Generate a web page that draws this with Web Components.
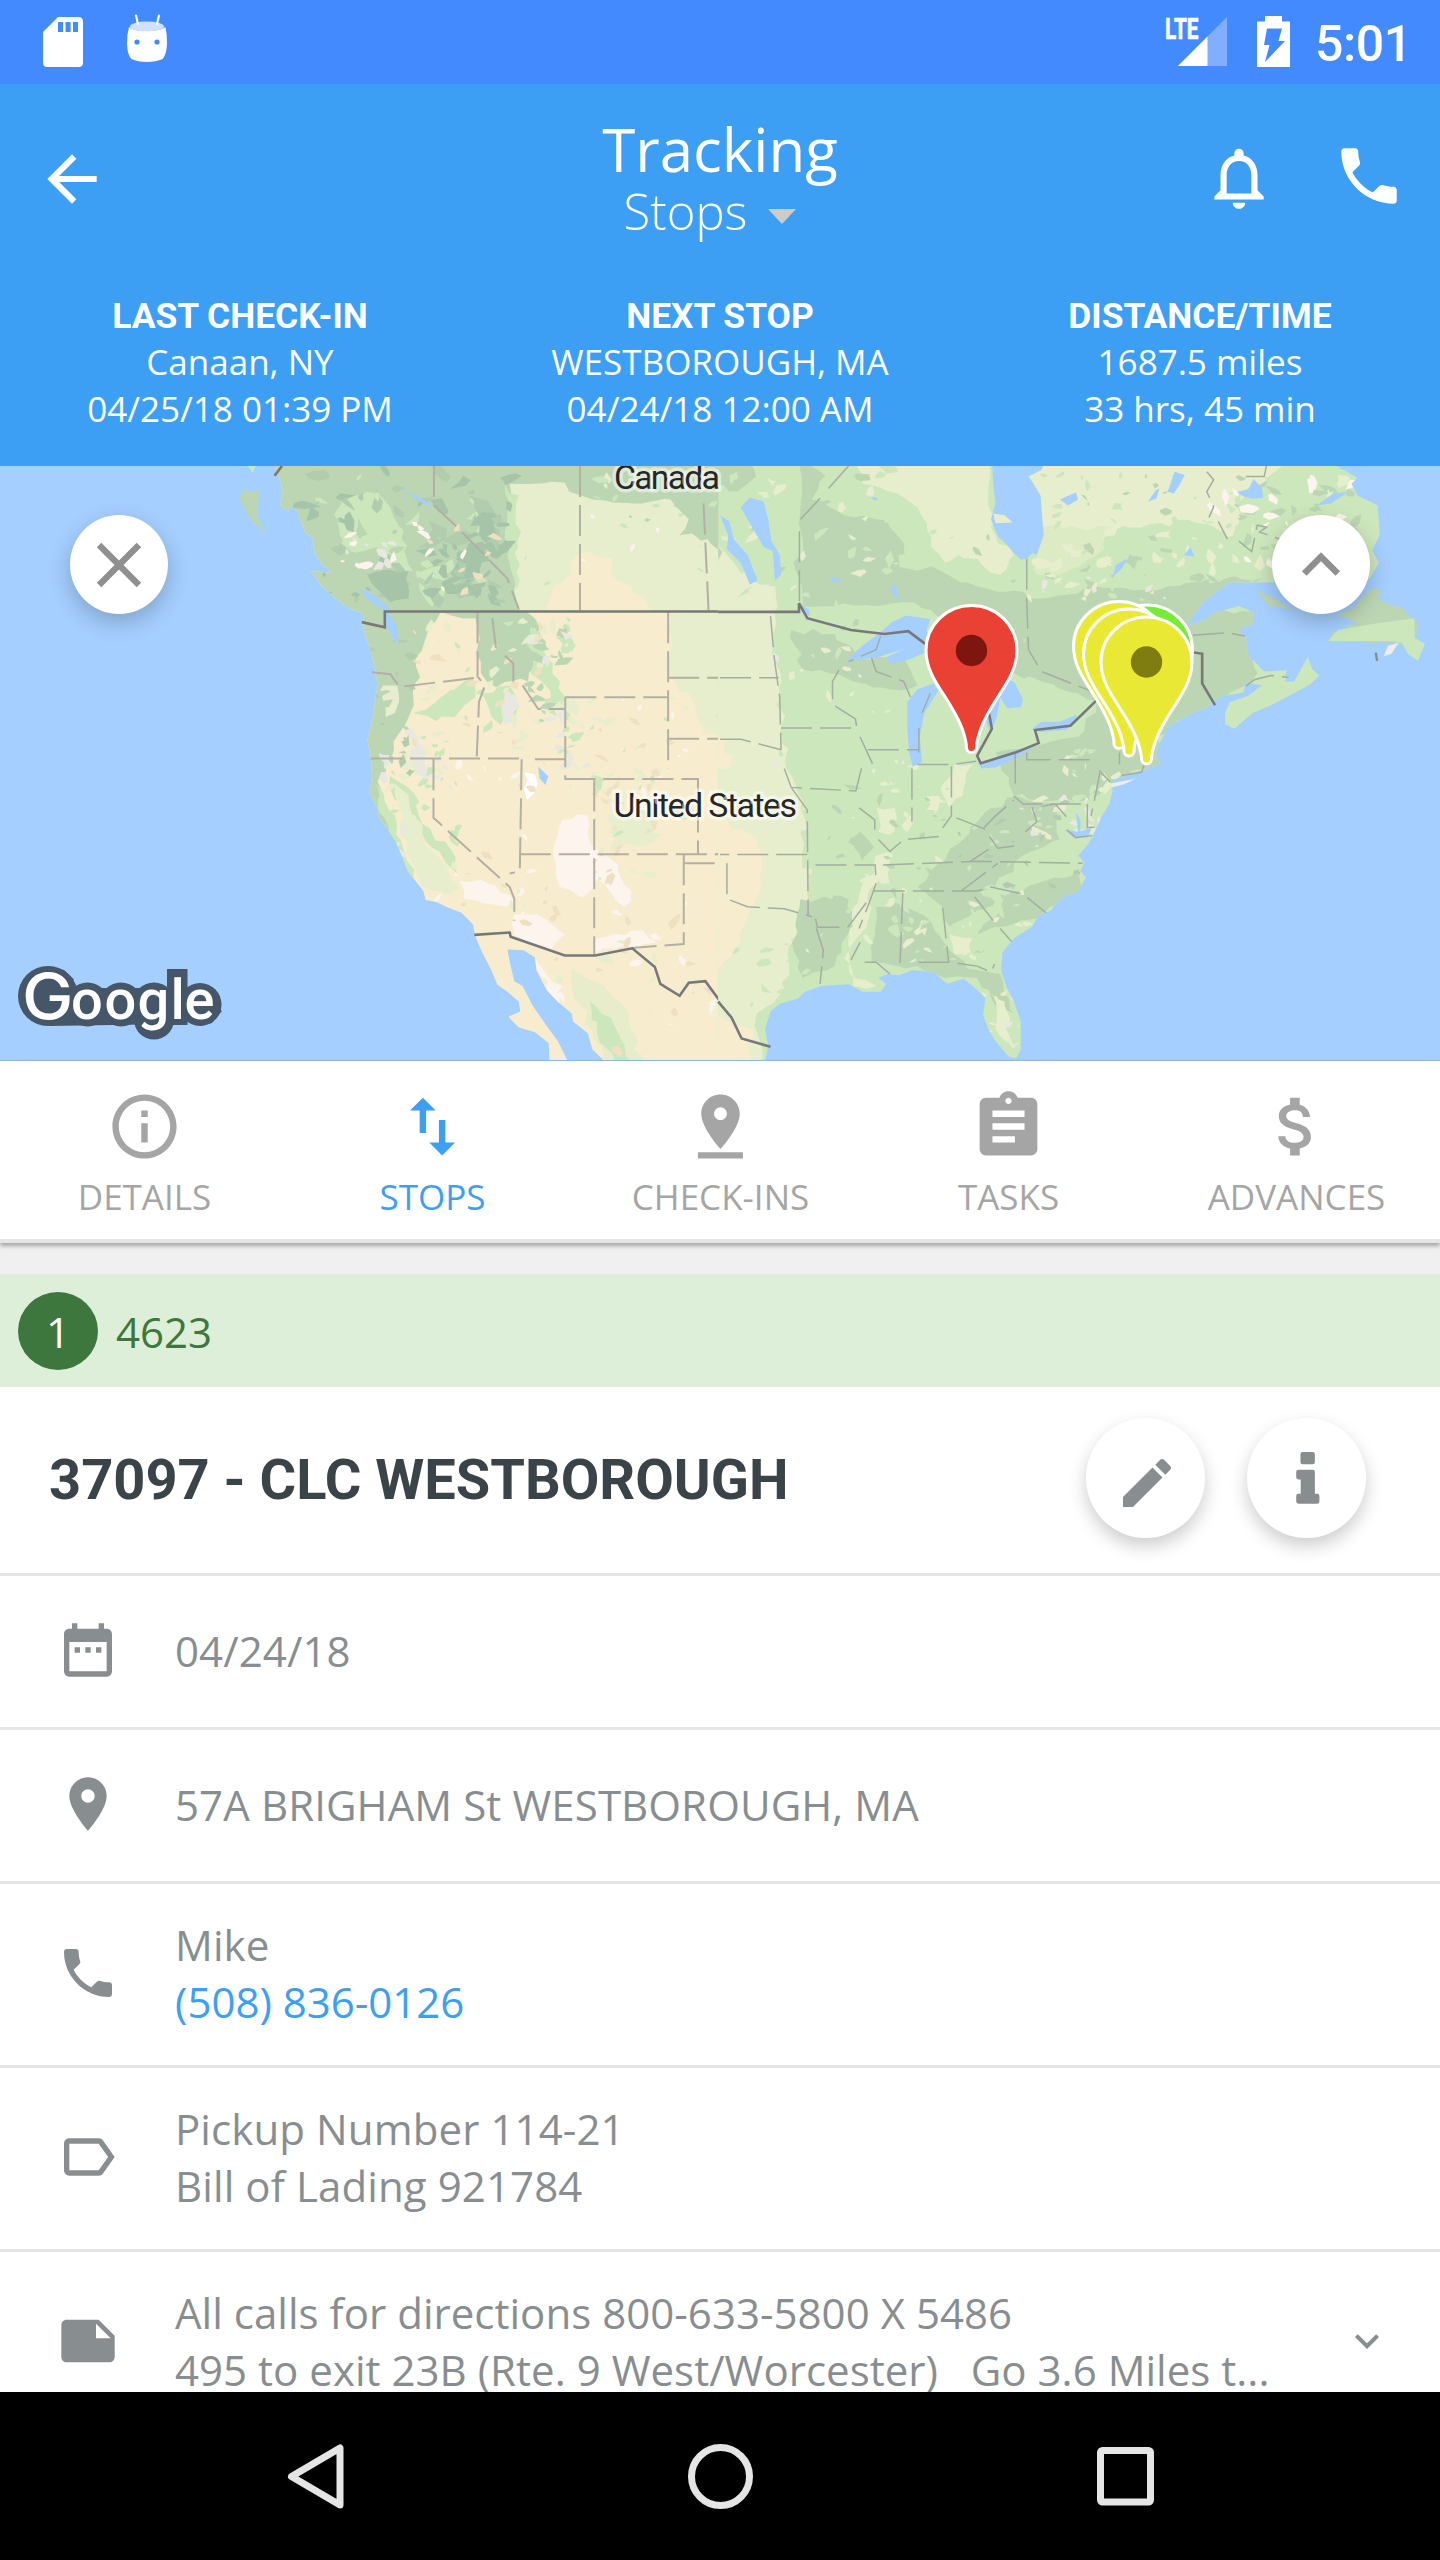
<!DOCTYPE html>
<html lang="en">
<head>
<meta charset="utf-8">
<title>Tracking</title>
<style>
html,body{margin:0;padding:0}
body{width:1440px;height:2560px;overflow:hidden;background:#fff;font-family:"Open Sans","Noto Sans",sans-serif}
</style>
</head>
<body>
<tracking-app></tracking-app>
<script>
const ICONS = {
  back: 'M20 11H7.83l5.59-5.59L12 4l-8 8 8 8 1.41-1.41L7.83 13H20v-2z',
  bell: 'M12 22c1.1 0 2-.9 2-2h-4c0 1.1.9 2 2 2zm6-6v-5c0-3.07-1.63-5.64-4.5-6.32V4c0-.83-.67-1.5-1.5-1.5s-1.5.67-1.5 1.5v.68C7.64 5.36 6 7.92 6 11v5l-2 2v1h16v-1l-2-2zm-2 1H8v-6c0-2.48 1.51-4.5 4-4.5s4 2.02 4 4.5v6z',
  phone: 'M6.62 10.79c1.44 2.83 3.76 5.14 6.59 6.59l2.2-2.2c.27-.27.67-.36 1.02-.24 1.12.37 2.33.57 3.57.57.55 0 1 .45 1 1V20c0 .55-.45 1-1 1-9.39 0-17-7.61-17-17 0-.55.45-1 1-1h3.5c.55 0 1 .45 1 1 0 1.25.2 2.45.57 3.57.11.35.03.74-.25 1.02l-2.2 2.2z',
  close: 'M19 6.41L17.59 5 12 10.59 6.41 5 5 6.41 10.59 12 5 17.59 6.41 19 12 13.41 17.59 19 19 17.59 13.41 12z',
  less: 'M12 8l-6 6 1.41 1.41L12 10.83l4.59 4.58L18 14z',
  more: 'M16.59 8.59L12 13.17 7.41 8.59 6 10l6 6 6-6z',
  details: 'M11 17h2v-6h-2v6zm1-15C6.48 2 2 6.48 2 12s4.48 10 10 10 10-4.48 10-10S17.52 2 12 2zm0 18c-4.41 0-8-3.59-8-8s3.59-8 8-8 8 3.59 8 8-3.59 8-8 8zM11 9h2V7h-2v2z',
  stops: 'M9 3L5 6.99h3V14h2V6.99h3L9 3zm7 14.01V10h-2v7.01h-3L15 21l4-3.99h-3z',
  checkins: 'M18 8c0-3.31-2.69-6-6-6S6 4.69 6 8c0 4.5 6 11 6 11s6-6.5 6-11zm-8 0c0-1.1.9-2 2-2s2 .9 2 2-.89 2-2 2c-1.1 0-2-.9-2-2zM5 20v2h14v-2H5z',
  tasks: 'M19 3h-4.18C14.4 1.84 13.3 1 12 1c-1.3 0-2.4.84-2.82 2H5c-1.1 0-2 .9-2 2v14c0 1.1.9 2 2 2h14c1.1 0 2-.9 2-2V5c0-1.1-.9-2-2-2zm-7 0c.55 0 1 .45 1 1s-.45 1-1 1-1-.45-1-1 .45-1 1-1zm2 14H7v-2h7v2zm3-4H7v-2h10v2zm0-4H7V7h10v2z',
  advances: 'M11.8 10.9c-2.27-.59-3-1.2-3-2.15 0-1.09 1.01-1.85 2.7-1.85 1.78 0 2.44.85 2.5 2.1h2.21c-.07-1.72-1.12-3.3-3.21-3.81V3h-3v2.16c-1.94.42-3.5 1.68-3.5 3.61 0 2.31 1.91 3.46 4.7 4.13 2.5.6 3 1.48 3 2.41 0 .69-.49 1.79-2.7 1.79-2.06 0-2.87-.92-2.98-2.1h-2.2c.12 2.19 1.76 3.42 3.68 3.83V21h3v-2.15c1.95-.37 3.5-1.5 3.5-3.55 0-2.84-2.43-3.81-4.7-4.4z',
  edit: 'M3 17.25V21h3.75L17.81 9.94l-3.75-3.75L3 17.25zM20.71 7.04c.39-.39.39-1.02 0-1.41l-2.34-2.34c-.39-.39-1.02-.39-1.41 0l-1.83 1.83 3.75 3.75 1.83-1.83z',
  info: 'M9.6 1.5h3.8q.8 0 .8.8v3q0 .8-.8.8H9.6q-.8 0-.8-.8v-3q0-.8.8-.8zM8 8.2h5.4q.8 0 .8.8v8.2h.9q.8 0 .8.8v2.1q0 .8-.8.8H8q-.8 0-.8-.8V18q0-.8.8-.8h.9v-5.400H8q-.8 0-.8-.8V9q0-.8.8-.8z',
  date: 'M9 11H7v2h2v-2zm4 0h-2v2h2v-2zm4 0h-2v2h2v-2zm2-7h-1V2h-2v2H8V2H6v2H5c-1.11 0-1.99.9-1.99 2L3 20c0 1.1.89 2 2 2h14c1.1 0 2-.9 2-2V6c0-1.1-.9-2-2-2zm0 16H5V9h14v11z',
  place: 'M12 2C8.13 2 5 5.13 5 9c0 5.25 7 13 7 13s7-7.75 7-13c0-3.87-3.13-7-7-7zm0 9.5c-1.38 0-2.5-1.12-2.5-2.5s1.12-2.5 2.5-2.5 2.5 1.12 2.5 2.5-1.12 2.5-2.5 2.5z',
  label: 'M17.63 5.84C17.27 5.33 16.67 5 16 5L5 5.01C3.9 5.01 3 5.9 3 7v10c0 1.1.9 1.99 2 1.99L16 19c.67 0 1.27-.33 1.63-.84L22 12l-4.37-6.16zM16 17H5V7h11l3.55 5L16 17z',
  note: 'M22 10l-6-6H4c-1.1 0-2 .9-2 2v12.010c0 1.1.9 1.99 2 1.99l16-.01c1.1 0 2-.89 2-2v-8zm-7-4.500l5.500 5.500H15V5.500z'
};

function define(name, render) {
  customElements.define(name, class extends HTMLElement {
    connectedCallback() {
      if (this.shadowRoot) return;
      this.attachShadow({mode: 'open'}).innerHTML = render(this);
    }
  });
}

define('md-icon', el => {
  const s = el.getAttribute('size') || 64;
  return `<style>:host{display:block;flex:none;width:${s}px;height:${s}px}svg{display:block}</style>
  <svg width="${s}" height="${s}" viewBox="0 0 24 24"><path fill="currentColor" d="${ICONS[el.getAttribute('name')]}"/></svg>`;
});

define('status-bar', () => `
<style>
:host{display:flex;justify-content:space-between;height:84px;background:#448aff;color:#fff}
svg{display:block}
.right{display:flex;align-items:flex-start}
time{font:500 50px/60px Roboto,sans-serif;padding-top:14px;width:125px;letter-spacing:-.4px}
</style>
<svg width="200" height="84" viewBox="0 0 200 84">
  <path fill="#fff" fill-rule="evenodd" d="M58 17H78.500Q83 17 83 21.500V62.500Q83 67 78.500 67H47.500Q43 67 43 62.500V32ZM58 22V32H63V22ZM65.600 22V32H70.600V22ZM73 22V32H78V22Z"/>
  <path fill="#fff" d="M129 27Q133 31 147 31T165.500 27Q167 34 167 43C167 49 165.500 56 162.500 59Q156 62 147 62T131.500 59C128.500 56 127 49 127 43Q127 34 129 27Z"/>
  <ellipse cx="147" cy="26.500" rx="17" ry="5" fill="#d0e1ff"/>
  <path d="M136 15.500L138 24M159 15.500L157 24" stroke="#fff" stroke-width="2.200" stroke-linecap="round"/>
  <circle cx="137" cy="42" r="2.600" fill="#448aff"/><circle cx="157" cy="42" r="2.600" fill="#448aff"/>
</svg>
<div class="right">
<svg width="165" height="84" viewBox="1150 0 165 84">
  <path fill="#81aeff" d="M1227 17V66H1178Z"/><path fill="#fff" d="M1207.500 36.500V66H1178Z"/>
  <text x="1165" y="39" font-family="Roboto,sans-serif" font-weight="700" font-size="29" textLength="33.500" lengthAdjust="spacingAndGlyphs" fill="#fff" stroke="#fff" stroke-width=".6">LTE</text>
  <path fill="#fff" fill-rule="evenodd" d="M1265 16H1282V21.500H1290V67H1257V21.500H1265ZM1267 28.500L1264 45H1269.500L1265 62L1285 41H1278.500L1282 28.500Z"/>
</svg>
<time>5:01</time>
</div>`);

define('app-header', () => `
<style>
:host{display:flex;flex-direction:column;height:382px;background:#3c9ff4;color:#fff}
.bar{display:grid;grid-template-columns:480px 480px 480px;height:210px}
.back{padding:58px 0 0 35px}
.title{display:flex;flex-direction:column;align-items:center;padding-top:35px;gap:8px}
h1{margin:0;font-weight:400;font-size:60px;line-height:60px}
.sub{display:flex;align-items:center;font-weight:300;font-size:49px;line-height:48px;gap:21px;margin-right:20px}
.caret{border:14.500px solid transparent;border-top:15px solid #ccc;border-bottom:0;margin-top:11px}
.acts{display:flex;justify-content:flex-end;gap:56px;padding:55px 34px 0 0}
.bell{padding-top:2px}
.cols{display:flex}
</style>
<div class="bar">
  <div class="back"><md-icon name="back" size="74"></md-icon></div>
  <div class="title"><h1>Tracking</h1><div class="sub"><span>Stops</span><span class="caret"></span></div></div>
  <div class="acts"><md-icon class="bell" name="bell" size="74"></md-icon><md-icon name="phone" size="74"></md-icon></div>
</div>
<div class="cols">
  <trip-fact heading="LAST CHECK-IN"><div>Canaan, NY</div><div>04/25/18 01:39 PM</div></trip-fact>
  <trip-fact heading="NEXT STOP"><div>WESTBOROUGH, MA</div><div>04/24/18 12:00 AM</div></trip-fact>
  <trip-fact heading="DISTANCE/TIME"><div>1687.5 miles</div><div>33 hrs, 45 min</div></trip-fact>
</div>`);

define('trip-fact', el => `
<style>
:host{display:block;flex:1;text-align:center;font-size:35px;line-height:47px}
b{display:block;font:700 35.400px/42px Roboto,sans-serif;padding:1px 0}
</style><b>${el.getAttribute('heading')}</b><slot></slot>`);

/* Map artwork: two halves, each drawn in a 1568-unit wide space. */
const WEST = '560,0 598,15 612,60 615,85 610,115 628,130 632,118 648,130 655,155 665,185 680,195 685,235 700,262 722,285 677,281 700,318 730,350 760,375 793,390 788,410 797,450 808,485 817,530 822,570 818,600 812,650 800,710 808,755 810,800 805,845 822,880 825,905 845,935 862,965 875,1000 888,1040 905,1065 922,1090 927,1113 950,1118 975,1132 1005,1145 1030,1175 1035,1205 1050,1245 1070,1290 1083,1327 1105,1345 1130,1370 1133,1395 1107,1408 1130,1435 1165,1447 1195,1475 1197,1540 1245,1540 1215,1470 1190,1430 1160,1380 1138,1330 1120,1318 1112,1280 1105,1238 1140,1240 1165,1258 1168,1290 1190,1340 1215,1370 1245,1400 1248,1420 1280,1450 1290,1490 1325,1530 1572,1530 1572,0';
const EAST = '-4,0 1320,0 1365,30 1388,45 1375,60 1388,90 1415,105 1432,115 1437,190 1420,228 1435,260 1415,300 1360,315 1202,310 1110,310 1085,330 1050,362 1015,420 1040,412 1080,385 1130,370 1162,385 1160,415 1128,428 1145,450 1150,490 1170,530 1200,550 1238,548 1228,560 1250,560 1265,530 1280,498 1290,530 1305,545 1285,568 1250,590 1200,620 1160,640 1120,680 1100,668 1100,640 1110,612 1150,597 1180,570 1145,563 1140,588 1090,598 1060,625 1020,645 975,675 965,700 955,720 950,750 960,768 940,778 890,795 850,812 855,835 848,870 832,900 820,930 803,970 780,1000 793,1018 785,1040 797,1055 780,1090 740,1110 720,1140 695,1150 680,1180 640,1210 615,1245 612,1290 625,1335 640,1370 655,1420 655,1490 645,1513 630,1510 600,1470 585,1440 573,1405 578,1360 555,1335 530,1312 495,1325 465,1295 420,1290 390,1303 365,1300 345,1310 362,1325 350,1345 310,1345 280,1325 220,1330 185,1345 170,1362 130,1375 110,1395 98,1440 105,1480 95,1540 -4,1540';

function rng(seed) { return () => (seed = (seed * 16807) % 2147483647) / 2147483647; }
function jag(points, seed, amount = 9) {
  const r = rng(seed), p = points.split(' ').map(s => s.split(',').map(Number)), out = [];
  p.forEach((a, i) => {
    const b = p[(i + 1) % p.length], n = Math.max(1, Math.round(Math.hypot(b[0] - a[0], b[1] - a[1]) / 22));
    for (let k = 0; k < n; k++) {
      const j = k ? amount : 0;
      out.push((a[0] + (b[0] - a[0]) * k / n + (r() - .5) * 2 * j).toFixed(0) + ',' + (a[1] + (b[1] - a[1]) * k / n + (r() - .5) * 2 * j).toFixed(0));
    }
  });
  return out.join(' ');
}
let patchSeed = 11;
const patch = (color, pts) => `<polygon fill="${color}" points="${jag(pts, patchSeed += 37)}"/>`;
function flecks(seed, x, y, w, h, count, size, colors) {
  const r = rng(seed * 7919); let s = '';
  for (let i = 0; i < 4; i++) r();
  for (let i = 0; i < count; i++) {
    const cx = x + r() * w, cy = y + r() * h, n = 4 + Math.floor(r() * 4), z = size * (.35 + r()), tilt = r() * 3, pts = [];
    for (let k = 0; k < n; k++) {
      const a = k / n * 6.283, q = z * (.35 + r() * .8), px = Math.cos(a) * q * .6, py = Math.sin(a) * q * 1.2;
      pts.push((cx + px * Math.cos(tilt) - py * Math.sin(tilt)).toFixed(0) + ',' + (cy + px * Math.sin(tilt) + py * Math.cos(tilt)).toFixed(0));
    }
    s += `<polygon fill="${colors[Math.floor(r() * colors.length)]}" points="${pts.join(' ')}"/>`;
  }
  return s;
}
const D = '#bcd6b4', M = '#cde7bd', P = '#e7eecd', C = '#f7edce', K = '#a6c5a8', W = '#fdf4ee', G = '#e8e8e0', T = '#eee0c0';

const westArt = () => `
<polygon fill="#bcd6b4" points="522,95 530,75 548,80 565,78 560,140 578,186 545,150"/><polygon fill="#cde7bd" points="540,15 558,15 550,32"/>
<g clip-path="url(#cw)">
<rect x="500" width="1080" height="1560" fill="${C}"/>
<rect x="1080" width="500" height="383" fill="${P}"/>
${patch(D, '540,0 1340,0 1290,40 1250,70 1200,55 1110,60 1100,180 1130,380 1165,400 1180,470 1150,560 1110,560 1080,575 1060,560 1040,470 1035,400 960,385 930,440 905,500 915,550 900,600 890,650 870,690 855,745 835,760 825,860 870,960 900,1060 780,900 760,400 560,200')}
${patch(D, '1240,0 1575,0 1575,250 1540,200 1480,190 1500,150 1460,100 1380,110 1290,100 1240,80')}
${patch(M, '740,90 800,80 850,120 875,200 900,280 880,280 820,220 760,230 735,160')}
${patch(M, '905,280 940,270 985,250 970,330 940,370 915,330')}
${patch(M, '1100,60 1130,90 1125,330 1105,240')}
${patch(C, '1190,370 1200,345 1225,310 1240,290 1255,240 1280,230 1335,250 1335,300 1400,345 1420,383 1200,383')}
${patch(P, '1455,385 1575,385 1575,700 1530,690 1500,590 1460,550')}
${patch(M, '1155,420 1180,470 1220,560 1240,660 1225,650 1180,560 1155,540')}
${patch(M, '1045,590 1110,570 1130,620 1090,670 1070,650')}
${patch(M, '900,640 960,600 1030,550 1035,600 990,650 950,660')}
${patch(M, '850,800 900,840 920,920 985,990 995,1045 940,980 905,900 860,860')}
${patch(M, '820,820 860,900 880,990 900,1060 860,1000 825,890')}
${patch(P, '860,820 890,850 920,950 960,1010 1000,1080 980,1100 920,1080 885,990')}
${patch(P, '835,570 865,570 860,640 840,650')}
${patch(G, '885,670 905,690 940,790 930,820 900,790')}
${patch(W, '1225,910 1280,900 1285,970 1330,1010 1375,1090 1360,1130 1300,1060 1270,1105 1220,1080 1205,1000')}
${patch(W, '1000,1065 1060,1070 1120,1120 1080,1125 1010,1110')}
${patch(W, '1120,1150 1170,1150 1230,1200 1200,1240 1120,1200')}
${patch(W, '1300,1210 1400,1190 1430,1220 1340,1235 1300,1245')}
${patch(W, '1165,1260 1190,1300 1225,1330 1220,1380 1190,1340')}
${patch('#fff', '1142,790 1165,795 1165,840 1148,860')}
${patch('#e7edcb', '1245,1290 1300,1320 1360,1380 1400,1530 1320,1530 1290,1440 1250,1360')}
${patch(M, '1285,1370 1330,1410 1360,1480 1380,1530 1340,1530 1300,1450')}
${patch(G, '1100,580 1125,600 1120,660 1100,670')}
${patch(P, '1320,900 1420,880 1430,960 1350,980')}
${flecks(71, 640, 20, 480, 330, 80, 22, [K, D, M, '#b2cdae'])}
${flecks(9, 930, 120, 170, 250, 60, 30, [K, K, '#b2cdae'])}
${flecks(18, 740, 190, 120, 90, 16, 14, [W, G])}
${flecks(19, 900, 130, 200, 200, 14, 15, [W, T])}
${patch(K, '800,290 890,280 890,350 850,360')}
${flecks(5, 1120, 70, 440, 300, 10, 8, [M, W])}
${flecks(33, 1150, 400, 100, 270, 44, 18, [M, P, G, D])}
${flecks(34, 1220, 600, 80, 200, 22, 17, [M, P, G])}
${flecks(50, 900, 400, 280, 330, 40, 16, [P, M, T, P])}
${flecks(60, 830, 700, 170, 380, 45, 14, [M, P, G])}
${flecks(67, 950, 760, 260, 430, 30, 13, [W, T, P])}
${flecks(90, 1200, 600, 370, 300, 36, 13, [P, P, M, W, T])}
${flecks(101, 1290, 780, 140, 300, 48, 15, [M, P, P, T])}
${flecks(120, 1200, 1100, 360, 400, 28, 15, [W, P, T])}
${flecks(140, 790, 400, 110, 400, 30, 16, ['#b2cdae', D])}
${flecks(141, 1280, 30, 290, 130, 20, 14, [P, M, D])}
</g>
<polygon class="wa" points="783,325 812,340 845,370 845,385 866,425 868,465 858,455 838,412 836,380 800,352"/>
<polygon class="wa" points="1172,776 1194,800 1188,822 1175,805"/><polygon class="wa" points="875,72 930,105 940,122 905,98"/>
<g class="st">
<path d="M945 15V115L1000 175 1050 235 1105 300 1130 378M1263 15V380M1532 110L1543 380"/>
<path d="M1040 385V548L1056 570 1043 612 1038 757M1072 400L1080 475M1100 495L1118 515V560M1138 570L1172 630H1230M810 537L850 542 870 574 1040 550M808 755H1138M1165 757H1229M1231 600V806M1231 600H1455M1455 385V780M1455 551H1572M1455 705H1572M1229 807H1520V995M944 757V905L1110 1080 1120 1110V1165M1136 757L1132 1040 1110 1046M1132 997H1572M1294 810V1252M1489 997V1224L1375 1234M1489 1020H1572"/>
</g>
<path class="bd" d="M598 40L614 15M788 410L838 423V383H1572M1033 1201L1110 1195 1112 1206 1230 1253H1296L1377 1235 1426 1282 1438 1325 1480 1355 1500 1322 1536 1318 1572 1375"/>`;

const eastArt = () => `
<g clip-path="url(#ce)">
<rect x="-4" width="1580" height="1560" fill="${M}"/>
${patch(P, '-10,200 60,300 120,320 115,440 130,600 145,780 180,860 190,1100 210,1200 150,1230 140,1340 80,1400 90,1560 -10,1560')}
${patch(D, '-10,0 90,0 60,60 20,80 -10,60')}
${patch(D, '175,0 230,40 200,100 270,140 340,150 370,170 400,210 390,270 480,280 560,320 640,330 700,350 760,340 800,320 900,330 950,330 1100,300 1180,300 1050,380 1180,380 1170,540 1100,610 950,700 970,780 860,800 840,830 800,860 740,860 640,850 600,740 780,700 820,610 700,560 640,540 560,500 460,380 400,360 340,370 250,370 180,370 165,280 180,200')}
${patch(P, '300,0 590,0 590,130 600,190 640,240 610,290 560,250 520,240 490,260 460,220 430,120 370,80 310,60')}
${patch(P, '670,40 700,0 1240,0 1180,60 1120,100 1130,160 1090,180 1040,160 960,160 850,180 760,190 700,200')}
${patch('#dcebc4', '700,170 860,170 820,240 760,280 690,290')}
${patch(C, '-10,905 80,960 90,1080 60,1160 30,1240 -10,1300')}
${patch(C, '-10,700 30,750 20,780 -10,780')}
${patch(C, '-10,1400 70,1440 60,1530 -10,1530')}
${patch(D, '155,430 250,440 300,500 400,500 430,570 370,580 290,560 240,540 180,530')}
${patch(D, '590,880 650,850 740,870 740,960 660,1000 620,1050 560,1100 470,1110 430,1080 520,970')}
${patch(D, '450,1090 560,1080 600,1120 500,1180')}
${patch(D, '175,1110 280,1110 290,1180 250,1280 180,1310 160,1240')}
${patch(D, '340,1130 380,1120 440,1150 500,1240 560,1290 610,1300 640,1400 600,1380 560,1310 490,1310 430,1280 330,1270')}
${patch(D, '640,1090 780,1040 790,1090 700,1150 620,1180 560,1200')}
${patch(D, '285,960 305,940 335,980 310,1015')}
${patch(P, '340,1000 370,990 370,1070 330,1080 320,1180 280,1240 290,1310 340,1330 290,1330 270,1260 300,1120')}
${patch(P, '510,770 550,770 530,830 500,880 480,830')}
${patch(P, '340,880 380,880 380,940 345,940')}
${patch(P, '450,850 478,850 475,885 450,885')}
${patch(P, '590,1350 620,1370 640,1490 600,1440')}
${patch(P, '500,1200 550,1210 550,1260 510,1250')}
${flecks(204, -10, 20, 400, 320, 50, 17, [M, D, P])}
${flecks(214, 180, 180, 500, 320, 36, 16, [M, D])}
${flecks(224, 700, 30, 480, 150, 30, 13, [M, D, M])}
${flecks(234, 700, 180, 680, 160, 60, 17, [M, D, P])}
${flecks(235, 1060, 40, 330, 240, 75, 19, [M, P, D, W])}
${flecks(244, 110, 400, 330, 450, 40, 11, [P, G, M])}
${flecks(254, 180, 820, 330, 400, 60, 15, [D, P, M])}
${flecks(264, 640, 850, 190, 130, 34, 13, [P, M, G])}
${flecks(274, 380, 1080, 330, 200, 60, 12, [M, P, M, D])}
${flecks(284, 520, 860, 270, 230, 30, 13, [M, '#b2cdae'])}
${flecks(294, 20, 1200, 300, 200, 26, 14, [M, P])}
${flecks(304, 570, 1340, 90, 160, 18, 11, [P, G, M])}
${flecks(314, 750, 730, 120, 150, 22, 12, [P, M])}
${flecks(324, 640, 290, 340, 90, 18, 11, [P, M, G])}
</g>
<polygon fill="${D}" points="${jag('1420,325 1442,330 1432,350 1455,365 1488,375 1505,400 1520,408 1513,450 1500,470 1460,460 1325,458 1335,435 1390,415 1345,395 1380,375',7,6)}"/>
<polygon fill="${M}" points="1345,430 1420,415 1512,400 1513,450 1535,465 1520,508 1498,490 1485,462 1460,458 1325,458"/>
<polygon fill="#f1ede6" points="1455,470 1478,462 1462,490 1445,497"/>
<polygon fill="${D}" points="1170,330 1200,345 1245,378 1195,370"/>
<polygon fill="${M}" points="1160,505 1185,535 1235,532 1230,548 1195,553 1165,530"/>
<polygon class="wa" points="592,0 595,60 600,110 590,150 605,192 625,215 640,235 655,252 668,250 680,235 690,240 705,190 698,90 680,55 672,42 700,25 710,0"/>
<polygon fill="${P}" points="595,135 620,140 637,158 600,160"/>
<g class="wa">
<polygon points="45,120 65,95 95,105 105,150 112,205 130,240 133,290 120,305 115,230 95,220 75,180"/>
<polygon points="0,140 20,155 30,200 60,240 82,305 65,315 45,260 15,225 18,190"/>
<polygon points="240,293 262,303 260,312 245,308"/><polygon points="370,330 380,312 392,355"/><polygon points="325,92 345,97 338,103"/>
<polygon points="740,100 775,82 780,100 758,115"/><polygon points="975,80 990,30 1012,38 1000,65 988,85"/><polygon points="932,105 950,75 957,72 950,98"/>
<polygon points="1125,80 1150,75 1162,48 1180,70 1183,95 1160,98 1140,92"/><polygon points="1300,115 1335,85 1370,80 1330,110"/>
<polygon points="855,295 862,265 887,250 875,275"/><polygon points="1010,240 1025,220 1033,245"/><polygon points="172,362 195,380 195,395 178,385"/>
<polygon points="275,508 310,470 345,440 375,410 405,393 458,402 450,430 462,480 410,505 375,515 360,500 400,478 340,500"/>
<polygon points="408,612 430,580 465,565 475,585 445,640 435,700 440,765 420,775 412,740 408,680"/>
<polygon points="500,555 560,540 640,560 660,605 655,625 625,628 610,600 604,645 590,690 570,640"/>
<polygon points="560,765 600,755 640,735 690,722 650,750 600,778 570,780"/>
<polygon points="680,680 700,662 740,662 775,645 778,655 755,682 700,688"/>
<polygon points="775,890 785,910 785,940 810,930 800,955 770,955 750,935 780,940"/>
</g>
<polygon fill="#f1ede6" points="850,818 905,806 880,820 852,828"/>
<g class="st e">
<path d="M175 150L218 97M236 72L280 15M173 180V360M668 250V360L672 480 700 535 820 590M1060 30L1075 50 1060 80 1075 118 1065 145M1085 155L1105 200M1130 205L1158 232 1170 165 1190 170 1175 182 1230 205M1145 42H1185L1190 15M0 551H128M110 395L118 500 130 600 133 733M0 706H45L133 733M133 678H298L295 655 245 618V560L262 525M330 500L340 535 400 560 415 600M350 445L340 480 280 510M458 590L440 640M433 678V740M322 733H433M305 700L332 768M140 780L155 828 296 837 308 780M418 780V915M430 770L505 770 558 762M504 775V900L485 930M643 740V825M668 740V758H820M640 850L660 870H800M155 828L190 885 192 1155M190 998H0M15 1020V1110L60 1130 140 1135 200 1155M208 1024H338L340 1070 325 1120 303 1185M303 880L337 910V935M345 960L370 990 400 960 480 952M355 1024L560 1015 790 1020M335 1090H560L590 1080 660 1098 710 1145M398 1095L392 1275M208 1160L212 1182H278L325 1110M210 1185L225 1240 218 1325M485 1132L498 1270M432 1270H500L560 1280 590 1295 598 1275M555 1105L595 1165M610 1185L635 1218M285 1265L305 1220M515 905L575 933 605 982 650 975M575 930L600 900 640 860M525 1090L605 1020M545 1015L585 985M665 940L690 915 680 880 730 870 760 910M800 870V930L820 928M755 935L775 955 810 950M828 785L820 835 808 900M830 790L850 815M870 770V740M315 1270H340L370 1300"/>
<path d="M1145 572L1165 555 1200 545 1238 550M1030 443L1105 437 1143 445M925 765L918 790 860 800"/>
</g>
<path class="bd" d="M-4 384H172V362L190 400 285 430 358 440 410 433 447 465M585 635L592 680 560 748 568 767 643 740 694 716 686 683 763 672 820 608M1030 486L1050 490V565L1078 620M-4 1370L25 1410 47 1463 110 1484"/>
<path d="M1428 487L1431 508" stroke="#888" stroke-width="5"/>`;

const PIN = 'M0-45C25-45 45.500-25 45.500 0C45.500 29 20 48 9 79C6 88 5 92 5 97A5 5 0 0 1-5 97C-5 92-6 88-9 79C-20 48-45.500 29-45.500 0C-45.500-25-25-45 0-45Z';
const pin = (x, y, color, dot) => `<g transform="translate(${x} ${y})"><path d="${PIN}" fill="${color}" stroke="#fff" stroke-width="3"/><circle r="15.700" fill="${dot}"/></g>`;

define('trip-map', () => `
<style>
:host{display:block;position:relative;height:595px;background:#a5cfff;overflow:hidden}
svg{display:block}
.wa{fill:#a5cfff}
.st path{fill:none;stroke:#b3afa4;stroke-width:2;vector-effect:non-scaling-stroke;stroke-dasharray:31 8}
.st.e path{stroke:#a3aea0;stroke-width:1.500}
.bd{fill:none;stroke:#77787a;stroke-width:2.600;vector-effect:non-scaling-stroke}
.lbl{font:400 34px Roboto,sans-serif;fill:#262626;paint-order:stroke;stroke:rgba(255,255,255,.5);stroke-width:7px;stroke-linejoin:round}
.logo text{font:500 56px Roboto,sans-serif;fill:#fff}
.logo .cap{font:500 63px Inter,sans-serif}
.logo .back{fill:#455668}
round-button{position:absolute;top:49px}
.close{left:70px}.up{left:1272px}
</style>
<svg width="1440" height="595" viewBox="0 466 1440 595">
<defs><clipPath id="cw"><polygon points="${WEST}"/></clipPath><clipPath id="ce"><polygon points="${EAST}"/></clipPath></defs>
<g transform="translate(0 460) scale(.4592 .39540)">${westArt()}</g>
<g transform="translate(720 460) scale(.4592 .39540)">${eastArt()}</g>
<text class="lbl" x="614" y="489" textLength="106">Canada</text>
<text class="lbl" x="613.500" y="816.500" textLength="183.500">United States</text>
${pin(1147, 650, '#76ec35', '#3f7f1d')}${pin(1119, 646.500, '#e9e935', '#7f7d0f')}${pin(1129, 654, '#e9e935', '#7f7d0f')}${pin(1146.500, 662, '#e9e935', '#7f7d0f')}
${pin(971.500, 650.500, '#ea4135', '#7d160f')}
<g class="logo">
  <g class="back"><circle cx="48" cy="996" r="30"/><polygon points="48,966 64,970 74,979.500 62,992 48,990"/><circle cx="87.500" cy="1004.500" r="22"/><circle cx="121" cy="1004.500" r="22"/><circle cx="154" cy="1004.500" r="22"/><circle cx="154" cy="1019.500" r="20"/><polygon points="62,988 174,988 174,1024 50,1026"/><rect x="167" y="969" width="20.500" height="56"/><circle cx="200" cy="1004.500" r="21.500"/><polygon points="200,985 218,995 221.500,1004 217,1008 222,1011 212,1023 200,1026"/></g>
  <text class="cap" x="22" y="1019" textLength="51.500" lengthAdjust="spacingAndGlyphs">G</text><text x="71 104.500 137.500 170.500 184.500" y="1019">oogle</text>
</g>
<path d="M0 1060.500H1440" stroke="#93b8e2"/>
</svg>
<round-button class="close" size="98" shadow="0 8px 22px rgba(0,0,0,.22)"><md-icon name="close" size="76"></md-icon></round-button>
<round-button class="up" size="98" shadow="0 8px 22px rgba(0,0,0,.22)"><md-icon name="less" size="76"></md-icon></round-button>`);

define('round-button', el => {
  const s = el.getAttribute('size');
  return `<style>:host{display:flex;align-items:center;justify-content:center;flex:none;width:${s}px;height:${+s + 1}px;border-radius:50%;background:#fff;color:#8f8f8f;box-shadow:${el.getAttribute('shadow')}}</style><slot></slot>`;
});

define('tab-bar', () => `
<style>:host{display:flex;position:relative;box-sizing:border-box;height:182px;background:#fff;border-bottom:4px solid #e5e5e5;box-shadow:0 3px 4px rgba(0,0,0,.3)}</style><slot></slot>`);
define('tab-item', el => `
<style>:host{display:flex;flex:1;flex-direction:column;align-items:center;gap:8px;padding-top:27px;font-size:35px;line-height:47px;color:#a5a5a5}
span{padding-left:1px}
:host([active]){color:#3c9ff4}</style>
<md-icon name="${el.getAttribute('icon')}" size="77"></md-icon><span><slot></slot></span>`);

define('stop-banner', el => `
<style>:host{display:flex;align-items:center;gap:18px;height:112px;padding:1px 0 0 18px;margin-top:31px;background:#ddefd8;color:#3d773d;font-size:42px;line-height:57px}
.n{width:80px;height:78px;border-radius:50%;background:#3d773d;color:#fff;display:flex;align-items:center;justify-content:center}</style>
<span class="n"><span>${el.getAttribute('number')}</span></span><slot></slot>`);

define('stop-title', () => `
<style>:host{display:flex;align-items:center;box-sizing:border-box;height:189px;border-bottom:3px solid #e5e5e5;padding:0 74px 0 49px}
h2{margin:0;flex:1;font:700 56px/66px Roboto,sans-serif;color:#3a4348}
.b{display:flex;gap:42px;margin-top:-4px}
round-button{color:#888e90}.e{padding:9px 0 0 3px}.i{padding:4px 0 0 5px}</style>
<h2><slot></slot></h2>
<div class="b"><round-button size="119" shadow="0 8px 18px rgba(0,0,0,.2)"><md-icon class="e" name="edit" size="64"></md-icon></round-button>
<round-button size="119" shadow="0 8px 18px rgba(0,0,0,.2)"><md-icon class="i" name="info" size="64"></md-icon></round-button></div>`);

define('detail-row', el => `
<style>:host{display:flex;align-items:center;flex:none;box-sizing:border-box;min-height:154px;border-bottom:3px solid #e5e5e5;padding:32px 49px 35px 55px;color:#888e90;font-size:42px;line-height:57px}
md-icon{margin:0 54px 0 1px}.t{flex:1;white-space:pre;letter-spacing:.1px;padding-left:1px}.m{margin:0}
:host([expandable]) .t{letter-spacing:.03px}
::slotted(a){color:#3c9ff4;text-decoration:none;display:block;letter-spacing:0}</style>
<md-icon name="${el.getAttribute('icon')}" size="64"></md-icon><div class="t"><slot></slot></div>${el.hasAttribute('expandable') ? '<md-icon class="m" name="more" size="48"></md-icon>' : ''}`);

define('nav-bar', () => `
<style>:host{display:flex;justify-content:center;height:168px;background:#000}svg{display:block}</style>
<svg width="1440" height="168" viewBox="0 2392 1440 168" fill="none" stroke="#e5e5e5" stroke-width="7" stroke-linejoin="round">
<path d="M340 2448V2505L291.500 2476.500Z"/><circle cx="720.500" cy="2476.500" r="29"/><rect x="1100.500" y="2450.500" width="50" height="51.500" rx="2"/></svg>`);

define('tracking-app', () => `
<style>:host{display:flex;flex-direction:column;width:1440px;height:2560px;background:#fff}
main{display:flex;flex-direction:column;height:1149px;overflow:hidden;background:linear-gradient(#f0f0f0 60px,#fff 60px)}
tab-bar{z-index:1}stop-title{background:#fff;flex:none}stop-banner{flex:none}</style>
<status-bar></status-bar>
<app-header></app-header>
<trip-map></trip-map>
<tab-bar><tab-item icon="details">DETAILS</tab-item><tab-item icon="stops" active>STOPS</tab-item><tab-item icon="checkins">CHECK-INS</tab-item><tab-item icon="tasks">TASKS</tab-item><tab-item icon="advances">ADVANCES</tab-item></tab-bar>
<main>
<stop-banner number="1">4623</stop-banner>
<stop-title>37097 - CLC WESTBOROUGH</stop-title>
<detail-row icon="date">04/24/18</detail-row>
<detail-row icon="place">57A BRIGHAM St WESTBOROUGH, MA</detail-row>
<detail-row icon="phone"><div>Mike</div><a>(508) 836-0126</a></detail-row>
<detail-row icon="label"><div>Pickup Number 114-21</div><div>Bill of Lading 921784</div></detail-row>
<detail-row icon="note" expandable><div>All calls for directions 800-633-5800 X 5486</div><div>495 to exit 23B (Rte. 9 West/Worcester)   Go 3.6 Miles t...</div></detail-row>
</main>
<nav-bar></nav-bar>`);
</script>
</body>
</html>
